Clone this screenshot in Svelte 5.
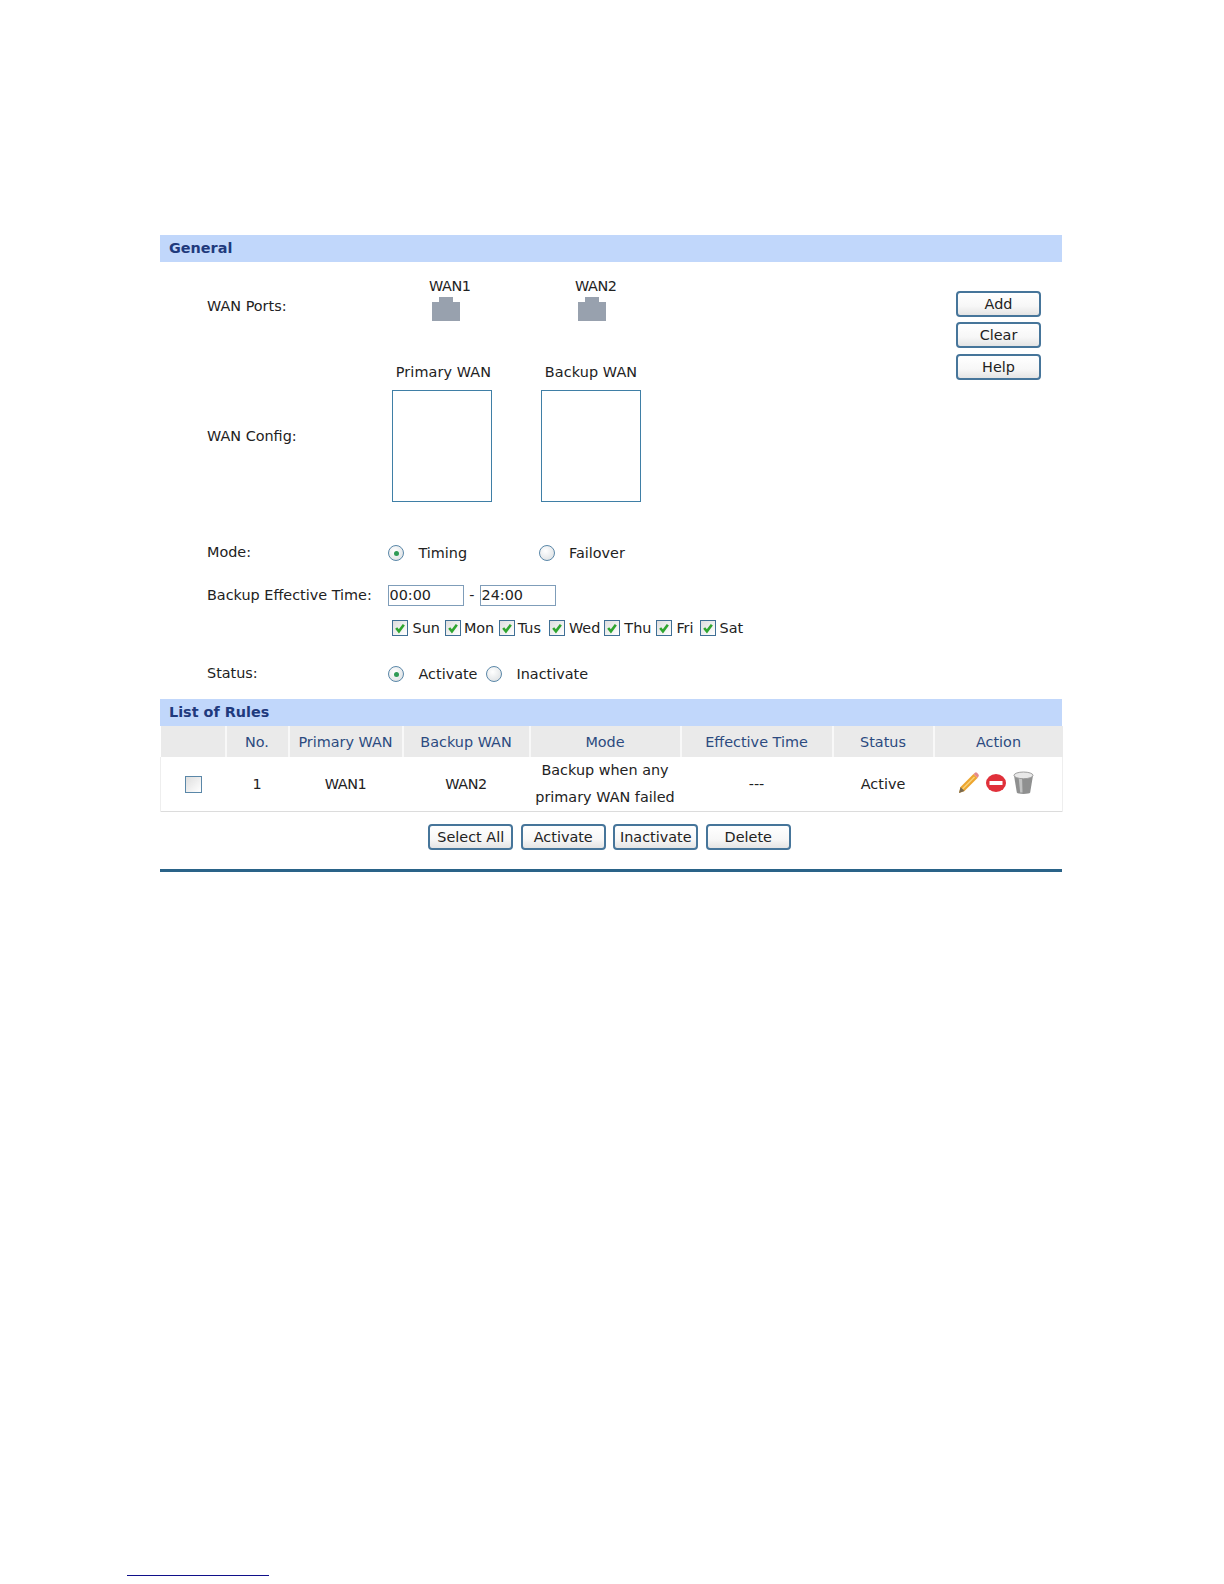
<script>
  const days = [
    { name: 'Sun', gap: 5, inner: 5 }, { name: 'Mon', gap: 4.5, inner: 3 }, { name: 'Tus', gap: 8, inner: 3 }, { name: 'Wed', gap: 4, inner: 4 },
    { name: 'Thu', gap: 5, inner: 4 }, { name: 'Fri', gap: 6, inner: 4 }, { name: 'Sat', gap: 0, inner: 4 }
  ];
  const cols = [
    { t: '', w: 65 }, { t: 'No.', w: 63 }, { t: 'Primary WAN', w: 114 }, { t: 'Backup WAN', w: 127 },
    { t: 'Mode', w: 151 }, { t: 'Effective Time', w: 152 }, { t: 'Status', w: 101 }, { t: 'Action', w: 129 }
  ];
</script>

{#snippet radio(on)}
  <span class="radio">{#if on}<span class="dot"></span>{/if}</span>
{/snippet}

{#snippet port()}
  <svg class="port" width="28" height="24" viewBox="0 0 28 24"><path d="M0 5H7V0H21V5H28V24H0Z" fill="#98a1ae"/></svg>
{/snippet}

<div class="page">
  <main class="panel">
    <h2 class="bar">General</h2>
    <section class="form">
      <div class="fields">
        <div class="row ports">
          <div class="label">WAN Ports:</div>
          <div class="portlist">
            <div class="portitem"><span>WAN1</span>{@render port()}</div>
            <div class="portitem"><span>WAN2</span>{@render port()}</div>
          </div>
        </div>
        <div class="row config">
          <div class="label">WAN Config:</div>
          <div class="boxes">
            <div class="boxitem"><span class="nudge">Primary WAN</span><div class="box"></div></div>
            <div class="boxitem"><span>Backup WAN</span><div class="box"></div></div>
          </div>
        </div>
        <div class="row mode">
          <div class="label">Mode:</div>
          <div class="choice c1">{@render radio(true)}<span>Timing</span></div>
          <div class="choice">{@render radio(false)}<span>Failover</span></div>
        </div>
        <div class="row time">
          <div class="label">Backup Effective Time:</div>
          <input class="timebox" value="00:00" readonly />
          <span class="dash">-</span>
          <input class="timebox" value="24:00" readonly />
        </div>
        <div class="days">
          {#each days as d}
            <label class="day" style="margin-right:{d.gap}px;gap:{d.inner}px">
              <span class="check"><svg width="12" height="12" viewBox="0 0 11 11"><path d="M2 5.500L4.500 8.500L9 2.500" fill="none" stroke="#2fa52f" stroke-width="2.400"/></svg></span>{d.name}
            </label>
          {/each}
        </div>
        <div class="row status">
          <div class="label">Status:</div>
          <div class="choice c2">{@render radio(true)}<span>Activate</span></div>
          <div class="choice">{@render radio(false)}<span>Inactivate</span></div>
        </div>
      </div>
      <div class="side">
        <button>Add</button>
        <button>Clear</button>
        <button>Help</button>
      </div>
    </section>

    <h2 class="bar">List of Rules</h2>
    <table>
      <colgroup>{#each cols as c}<col style="width:{c.w}px" />{/each}</colgroup>
      <thead>
        <tr>{#each cols as c}<th>{c.t}</th>{/each}</tr>
      </thead>
      <tbody>
        <tr>
          <td><span class="check empty"></span></td>
          <td>1</td>
          <td class="tight">WAN1</td>
          <td class="tight">WAN2</td>
          <td class="multi">Backup when any<br />primary WAN failed</td>
          <td>---</td>
          <td>Active</td>
          <td>
            <div class="actions">
              <svg width="23" height="22" viewBox="0 0 22 22">
                <path d="M1.500 21L3 15L16 2L20 6L7 19Z" fill="#eda52f"/>
                <path d="M5 17L17 5" stroke="#f8d27a" stroke-width="1.500"/>
                <path d="M16 2L17.500 .7Q18.500 0 19.500 .8L21 2.400Q21.800 3.400 21 4.400L20 6Z" fill="#e58a8a"/>
                <path d="M1.500 21L3 15L7 19Z" fill="#7a6a50"/>
              </svg>
              <svg width="20" height="18" viewBox="0 0 20 18">
                <ellipse cx="10" cy="9" rx="10" ry="9" fill="#e0303a"/>
                <rect x="3.500" y="7" width="13" height="4" fill="#fff"/>
              </svg>
              <svg width="21" height="24" viewBox="0 0 22 24">
                <path d="M1 4L4 22Q5 23.500 11 23.500T18 22L21 4Z" fill="#8f9090"/>
                <path d="M6 7L7.500 22H10L9.500 7Z" fill="#c2c3c3"/>
                <ellipse cx="11" cy="4" rx="10" ry="3.500" fill="#e8e8e8" stroke="#9a9a9a"/>
              </svg>
            </div>
          </td>
        </tr>
      </tbody>
    </table>
    <div class="buttons">
      <button>Select All</button>
      <button>Activate</button>
      <button>Inactivate</button>
      <button>Delete</button>
    </div>
    <div class="rule"></div>
  </main>
  <footer class="note"></footer>
</div>

<style>
  :global(body) { margin: 0; background: #fff; }
  .page {
    height: 1584px;
    box-sizing: border-box;
    padding-top: 235px;
    position: relative;
    font-family: "DejaVu Sans", Verdana, sans-serif;
    font-size: 14.4px;
    color: #222;
  }
  .panel { width: 902px; margin-left: 160px; }
  .bar {
    margin: 0;
    height: 27px;
    line-height: 26.500px;
    padding-left: 9px;
    background: #c1d7fb;
    color: #1f3a7d;
    font-size: 14.4px;
    font-weight: bold;
  }
  .form {
    height: 437px;
    display: flex;
    justify-content: space-between;
    padding: 0 21px 0 47px;
    box-sizing: border-box;
  }
  .fields { padding-top: 16px; }
  .row { display: flex; align-items: center; }
  .label { width: 181px; flex: none; box-sizing: border-box; white-space: nowrap; }
  .ports { height: 43px; }
  .ports .label { padding-top: 12px; }
  .portlist { display: flex; gap: 104px; margin-left: 41px; }
  .portitem { display: flex; flex-direction: column; width: 42px; }
  .portitem span { line-height: 17px; margin-bottom: 2px; letter-spacing: -.4px; }
  .port { margin-left: 3px; }
  .config { margin-top: 42px; }
  .config .label { padding-top: 7px; }
  .boxes { display: flex; gap: 49px; margin-left: 4px; }
  .boxitem { display: flex; flex-direction: column; align-items: center; width: 100px; }
  .boxitem span { line-height: 18px; margin-bottom: 9px; white-space: nowrap; letter-spacing: .1px; }
  .boxitem .nudge { padding-left: 3px; }
  .box { width: 100px; height: 112px; box-sizing: border-box; border: 1.5px solid #3f7fa6; background: #fff; }
  .mode { margin-top: 41px; height: 20px; }
  .mode .label, .status .label { padding-bottom: 2px; }
  .choice { display: flex; align-items: center; gap: 14.500px; }
  .c1 { width: 150.500px; }
  .c2 { width: 98px; }
  .radio {
    width: 16px; height: 16px;
    box-sizing: border-box;
    border: 1.5px solid #5a87a8;
    border-radius: 50%;
    background: radial-gradient(circle at 40% 35%, #fff, #d8dcdf);
    display: inline-flex; align-items: center; justify-content: center;
    flex: none;
  }
  .dot { width: 5px; height: 5px; border-radius: 50%; background: #2f9a55; }
  .time { margin-top: 21px; height: 22px; }
  .timebox {
    width: 76px; height: 21px; padding: 0 1px;
    box-sizing: border-box;
    margin: 0 0 0 -.5px;
    border: 1px solid #7f9db9;
    border-radius: 0;
    font: inherit;
    color: #222;
    outline: none;
    flex: none;
  }
  .dash { width: 16.5px; text-align: center; }
  .days { display: flex; margin: 11px 0 0 184.5px; height: 22px; align-items: center; }
  .day { display: flex; align-items: center; }
  .check {
    width: 16px; height: 16px;
    box-sizing: border-box;
    border: 1.5px solid #3f6f95;
    background: linear-gradient(135deg, #dedede, #fff);
    display: inline-flex; align-items: center; justify-content: center;
    flex: none;
  }
  .status { margin-top: 25px; height: 20px; }
  .side { display: flex; flex-direction: column; gap: 5.3px; padding-top: 29px; }
  button {
    width: 85px; height: 26px;
    padding: 0;
    border: 2px solid #46759a;
    border-radius: 4px;
    background: linear-gradient(#fff, #f7f7f7 60%, #e4e4e4);
    font: inherit;
    color: #222;
  }
  table {
    width: 902px;
    table-layout: fixed;
    border-collapse: collapse;
    border-bottom: 1px solid #dcdcdc;
  }
  th {
    height: 30px;
    padding: 1px 0 0;
    background: #eaeaea;
    color: #2c4a80;
    font-weight: normal;
    border-left: 2px solid #f8f8f8;
  }
  th:first-child { border-left: 0; }
  td { height: 52px; padding: 0; text-align: center; }
  td:first-child { border-left: 1px solid #eee; }
  td:last-child { border-right: 1px solid #eee; }
  .tight { letter-spacing: -.4px; }
  .multi { line-height: 27px; }
  td .check { vertical-align: middle; width: 17px; height: 17px; }
  .empty { border-color: #5a87a8; }
  .actions { display: flex; align-items: center; justify-content: center; gap: 6.500px; margin: -2px 0 0 -5px; }
  .buttons { display: flex; justify-content: center; gap: 7.500px; margin: 12px 0 0 -3px; }
  .rule { height: 3px; background: #2a6388; margin-top: 18.500px; }
  .note { position: absolute; left: 127px; top: 1575px; width: 142px; height: 1px; background: #10108a; }
</style>
